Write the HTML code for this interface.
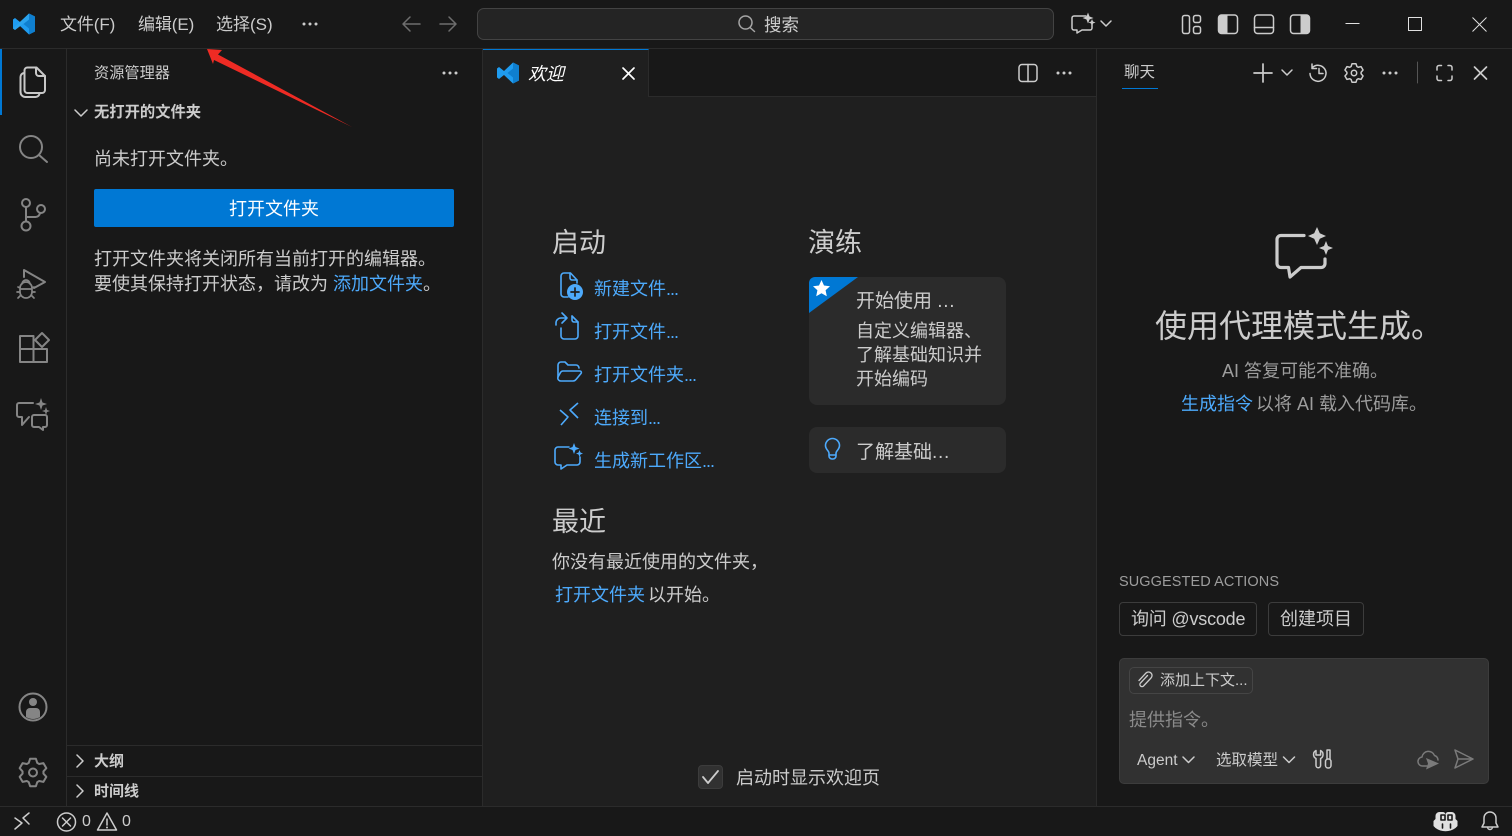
<!DOCTYPE html>
<html lang="zh"><head><meta charset="utf-8"><title>VS Code</title>
<style>
html,body{margin:0;padding:0;width:1512px;height:836px;overflow:hidden;background:#181818}
body{position:relative;font-family:"Liberation Sans","Noto Sans CJK SC",sans-serif;color:#ccc}
.t{position:absolute;white-space:nowrap;line-height:1;font-size:18px}
.b{position:absolute;box-sizing:border-box}
.l{color:#4daafc}
.d{letter-spacing:-1px}
.e{letter-spacing:.7px}
svg{position:absolute;left:0;top:0}
</style></head><body>
<!-- panels -->
<div class="b" style="left:0;top:48px;width:1512px;height:1px;background:#2b2b2b"></div>
<div class="b" style="left:66px;top:49px;width:1px;height:757px;background:#2b2b2b"></div>
<div class="b" style="left:482px;top:49px;width:1px;height:757px;background:#2b2b2b"></div>
<div class="b" style="left:483px;top:97px;width:613px;height:709px;background:#1f1f1f"></div>
<div class="b" style="left:483px;top:96px;width:613px;height:1px;background:#2b2b2b"></div>
<div class="b" style="left:483px;top:49px;width:166px;height:48px;background:#1f1f1f;border-top:1px solid #0078d4;border-right:1px solid #2b2b2b"></div>
<div class="b" style="left:1096px;top:49px;width:1px;height:757px;background:#2b2b2b"></div>
<div class="b" style="left:0;top:806px;width:1512px;height:1px;background:#2b2b2b"></div>
<div class="b" style="left:67px;top:745px;width:415px;height:1px;background:#2b2b2b"></div>
<div class="b" style="left:67px;top:776px;width:415px;height:1px;background:#2b2b2b"></div>
<div class="b" style="left:0;top:49px;width:2px;height:66px;background:#0078d4"></div>
<!-- title bar -->
<span class="t" style="left:60px;top:16px;font-size:17px;letter-spacing:-.1px">文件(F)</span>
<span class="t" style="left:138px;top:16px;font-size:17px;letter-spacing:-.1px">编辑(E)</span>
<span class="t" style="left:216px;top:16px;font-size:17px">选择(S)</span>
<div class="b" style="left:477px;top:8px;width:577px;height:32px;background:#242424;border:1px solid #434343;border-radius:7px"></div>
<span class="t" style="left:764px;top:17px;color:#ccc;font-size:17.500px">搜索</span>
<!-- sidebar -->
<span class="t" style="left:94px;top:66px;font-size:15.200px">资源管理器</span>
<span class="t" style="left:94px;top:105px;font-size:15.300px;font-weight:700">无打开的文件夹</span>
<span class="t" style="left:94px;top:150px">尚未打开文件夹。</span>
<div class="b" style="left:94px;top:189px;width:360px;height:38px;background:#0078d4;border-radius:2px"></div>
<span class="t" style="left:229px;top:200px;color:#fff">打开文件夹</span>
<span class="t" style="left:94px;top:250px">打开文件夹将关闭所有当前打开的编辑器。</span>
<span class="t" style="left:94px;top:275px">要使其保持打开状态，请改为 <span class="l">添加文件夹</span>。</span>
<span class="t" style="left:94px;top:754px;font-size:15px;font-weight:700">大纲</span>
<span class="t" style="left:94px;top:784px;font-size:15px;font-weight:700">时间线</span>
<!-- editor -->
<span class="t" style="left:528px;top:65px;color:#fff;font-style:italic">欢迎</span>
<span class="t" style="left:552px;top:230px;font-size:27px">启动</span>
<span class="t l" style="left:594px;top:280px">新建文件<span class="d">...</span></span>
<span class="t l" style="left:594px;top:323px">打开文件<span class="d">...</span></span>
<span class="t l" style="left:594px;top:366px">打开文件夹<span class="d">...</span></span>
<span class="t l" style="left:594px;top:409px">连接到<span class="d">...</span></span>
<span class="t l" style="left:594px;top:452px">生成新工作区<span class="d">...</span></span>
<span class="t" style="left:552px;top:509px;font-size:27px">最近</span>
<span class="t" style="left:552px;top:553px">你没有最近使用的文件夹，</span>
<span class="t" style="left:555px;top:586px"><span class="l">打开文件夹</span><span style="margin-left:3px">以开始。</span></span>
<span class="t" style="left:808px;top:230px;font-size:27px">演练</span>
<div class="b" style="left:809px;top:277px;width:197px;height:128px;background:#2b2b2b;border-radius:8px"></div>
<div class="b" style="left:809px;top:427px;width:197px;height:46px;background:#2b2b2b;border-radius:8px"></div>
<span class="t" style="left:856px;top:292px;font-size:19px">开始使用 <span class="e">...</span></span>
<span class="t" style="left:856px;top:322px">自定义编辑器、</span>
<span class="t" style="left:856px;top:346px">了解基础知识并</span>
<span class="t" style="left:856px;top:370px">开始编码</span>
<span class="t" style="left:856px;top:443px;font-size:19px">了解基础<span class="e">...</span></span>
<div class="b" style="left:698px;top:765px;width:25px;height:24px;background:#313131;border:1px solid #3c3c3c;border-radius:4px"></div>
<span class="t" style="left:736px;top:769px">启动时显示欢迎页</span>
<!-- chat -->
<span class="t" style="left:1124px;top:65px;font-size:15.500px">聊天</span>
<div class="b" style="left:1122px;top:88px;width:36px;height:1px;background:#0078d4"></div>
<span class="t" style="left:1155px;top:310px;font-size:32px">使用代理模式生成。</span>
<span class="t" style="left:1222px;top:362px;color:#9d9d9d">AI 答复可能不准确。</span>
<span class="t" style="left:1181px;top:395px;color:#9d9d9d"><span class="l">生成指令</span><span style="margin-left:3px">以将 AI 载入代码库。</span></span>
<span class="t" style="left:1119px;top:575px;font-size:14.500px;letter-spacing:.08px;color:#9d9d9d">SUGGESTED ACTIONS</span>
<div class="b" style="left:1119px;top:602px;width:138px;height:34px;border:1px solid #3c3c3c;border-radius:4px"></div>
<span class="t" style="left:1131px;top:610px;letter-spacing:-.2px">询问 @vscode</span>
<div class="b" style="left:1268px;top:602px;width:96px;height:34px;border:1px solid #3c3c3c;border-radius:4px"></div>
<span class="t" style="left:1280px;top:610px">创建项目</span>
<div class="b" style="left:1119px;top:658px;width:370px;height:126px;background:#313131;border:1px solid #3c3c3c;border-radius:5px"></div>
<div class="b" style="left:1129px;top:667px;width:124px;height:27px;border:1px solid #454545;border-radius:5px"></div>
<span class="t" style="left:1160px;top:673px;font-size:15px">添加上下文...</span>
<span class="t" style="left:1129px;top:711px;color:#8a8a8a">提供指令。</span>
<span class="t" style="left:1137px;top:753px;font-size:15.500px">Agent</span>
<span class="t" style="left:1216px;top:753px;font-size:15.500px">选取模型</span>
<!-- status -->
<span class="t" style="left:82px;top:814px;font-size:16px">0</span>
<span class="t" style="left:122px;top:814px;font-size:16px">0</span>

<svg width="1512" height="836" viewBox="0 0 1512 836" fill="none" stroke-linecap="round" stroke-linejoin="round">
<!-- logo -->
<path d="M29 13.500 35 16.500V31.500L29 34.500 20 26l-5 4-2-1.500V19.500L15 18l5 4z" fill="#1f9cf0"/>
<path d="M29 13.500 35 16.500V31.500L29 34.500zM29 19.500 23.500 24l5.500 4.500z" fill="#0f7fcf"/>
<path d="M13 28.500 29 13.500v6L15 30z" fill="#2aa3ee"/>
<g transform="translate(484,49)"><path d="M29 13.500 35 16.500V31.500L29 34.500 20 26l-5 4-2-1.500V19.500L15 18l5 4z" fill="#1f9cf0"/><path d="M29 13.500 35 16.500V31.500L29 34.500zM29 19.500 23.500 24l5.500 4.500z" fill="#0f7fcf"/></g>
<!-- dots -->
<g fill="#ccc"><circle cx="304" cy="24" r="1.500"/><circle cx="310" cy="24" r="1.500"/><circle cx="316" cy="24" r="1.500"/>
<circle cx="444" cy="73" r="1.500"/><circle cx="450" cy="73" r="1.500"/><circle cx="456" cy="73" r="1.500"/>
<circle cx="1058" cy="73" r="1.500"/><circle cx="1064" cy="73" r="1.500"/><circle cx="1070" cy="73" r="1.500"/>
<circle cx="1384" cy="73" r="1.500"/><circle cx="1390" cy="73" r="1.500"/><circle cx="1396" cy="73" r="1.500"/></g>
<!-- nav arrows -->
<path d="M403 24H420M410 17l-7 7 7 7M440 24H456M449 17l7 7-7 7" stroke="#6e6e6e" stroke-width="1.500"/>
<!-- search -->
<circle cx="745.500" cy="22.500" r="6.500" stroke="#a5a5a5" stroke-width="1.500"/><path d="M750 27.500l4.500 4" stroke="#a5a5a5" stroke-width="1.500"/>
<!-- copilot top -->
<g stroke="#ccc" stroke-width="1.500"><path d="M1086 16h-12a2 2 0 0 0-2 2v10a2 2 0 0 0 2 2h3v3l5-3h8a2 2 0 0 0 2-2v-4"/><path d="M1101 21l5 5 5-5"/></g>
<path d="M1088 12.500l1.500 4 4 1.500-4 1.500-1.500 4-1.500-4-4-1.500 4-1.500zM1092 19l1 2.500 2.500 1-2.500 1-1 2.500-1-2.500-2.500-1 2.500-1z" fill="#ccc"/>
<!-- layout icons -->
<g stroke="#ccc" stroke-width="1.500"><rect x="1182.500" y="15.500" width="7" height="18" rx="2"/><rect x="1193.500" y="15.500" width="7" height="7" rx="2"/><rect x="1193.500" y="26.500" width="7" height="7" rx="2"/>
<rect x="1218.500" y="15" width="19" height="18.500" rx="3"/><rect x="1254.500" y="15" width="19" height="18.500" rx="3"/><path d="M1254.500 27.500h19"/><rect x="1290.500" y="15" width="19" height="18.500" rx="3"/></g>
<path d="M1218.500 18a3 3 0 0 1 3-3h6v18.500h-6a3 3 0 0 1-3-3zM1309.500 18a3 3 0 0 0-3-3h-6v18.500h6a3 3 0 0 0 3-3z" fill="#ccc"/>
<!-- window -->
<g stroke="#e0e0e0" stroke-width="1" stroke-linecap="butt"><path d="M1345.500 23.500h14"/><rect x="1408.500" y="17.500" width="13" height="13"/><path d="M1472.500 17.500l14 14M1486.500 17.500l-14 14"/></g>
<!-- arrow -->
<path d="M207 49 222 50 218 54.500 352 127 214 60 213 64z" fill="#ee2b24"/>
<!-- activity -->
<g stroke="#c8c8c8" stroke-width="2"><path d="M27.500 67.500h9l8.500 8.500v14a3 3 0 0 1-3 3H27.500a3 3 0 0 1-3-3v-19.500a3 3 0 0 1 3-3z"/><path d="M36 67.500V73a3 3 0 0 0 3 3h6"/><path d="M24 73a4 4 0 0 0-3.500 4v15a5 5 0 0 0 5 5h10a4 4 0 0 0 4-3.500"/></g>
<g stroke="#858585" stroke-width="2">
<circle cx="31" cy="147" r="11"/><path d="M39 155l8 7"/>
<circle cx="26" cy="203" r="4"/><circle cx="26" cy="226" r="4.500"/><circle cx="41" cy="209" r="4"/><path d="M26 207v14.500M40 213a4.500 4.500 0 0 1-4.500 4H26"/>
<path d="M24 277v-7l21 12-11 6"/>
<path d="M20 288a6 6 0 0 1 12 0v4a6 6 0 0 1-12 0zM22 284a4 4 0 0 1 8 0M18 287l2 1M34 287l-2 1M17 292h3M35 292h-3M18 298l3-3M34 298l-3-3M20 289h12" stroke-width="1.700"/>
<path d="M33.500 336H20v26h27v-13H33.500V336M20 349h13.500v13"/><path d="M42 333l7 7-7 7-7-7z"/>
<path d="M33 403H19a2 2 0 0 0-2 2v10a2 2 0 0 0 2 2h3v8l7-8"/><path d="M34 415h11a2 2 0 0 1 2 2v8a2 2 0 0 1-2 2h-2v3l-4-3h-5a2 2 0 0 1-2-2v-8a2 2 0 0 1 2-2z"/>
<circle cx="33" cy="707" r="13.500"/>
<path transform="translate(33,772.500)" d="M-4.270-9.590L-2.910-13.690 2.910-13.690 4.270-9.590 6.170-8.490 10.400-9.370 13.310-4.330 10.440-1.100 10.440 1.100 13.310 4.330 10.400 9.370 6.170 8.490 4.270 9.590 2.910 13.690-2.910 13.690-4.270 9.590-6.170 8.490-10.400 9.370-13.310 4.330-10.440 1.100-10.440-1.100-13.310-4.330-10.400-9.370-6.170-8.490z"/>
<circle cx="33" cy="772.500" r="4"/>
</g>
<path d="M41 398l1.500 4.500 4.500 1.500-4.500 1.500-1.500 4.500-1.500-4.500-4.500-1.500 4.500-1.500zM46 407l1 3 3 1-3 1-1 3-1-3-3-1 3-1z" fill="#858585"/>
<circle cx="33" cy="702" r="4" fill="#858585"/><path d="M26 717v-5a4 4 0 0 1 4-4h6a4 4 0 0 1 4 4v5a13 13 0 0 1-14 0z" fill="#858585"/>
<!-- sidebar chevrons -->
<g stroke="#ccc" stroke-width="1.500"><path d="M75 110l6 6 6-6M77 755l6 6-6 6M77 785l6 6-6 6"/></g>
<!-- tab close -->
<path d="M623 68l11 11M634 68l-11 11" stroke="#fff" stroke-width="1.700"/>
<!-- split -->
<rect x="1019" y="64.500" width="18" height="17" rx="3" stroke="#ccc" stroke-width="1.500"/><path d="M1028 64.500v17" stroke="#ccc" stroke-width="1.500"/>
<!-- welcome icons -->
<g stroke="#4daafc" stroke-width="1.600">
<path d="M568 297h-4a3 3 0 0 1-3-3v-18a3 3 0 0 1 3-3h6.500l6.500 7v3"/><path d="M570 273v5a2 2 0 0 0 2 2h5"/>
<path d="M556 325v-2a5 5 0 0 1 5-5h6M562 313l5 5-5 5"/><path d="M561 328v8a3 3 0 0 0 3 3h11a3 3 0 0 0 3-3v-14l-6-6"/><path d="M572 316v4a2 2 0 0 0 2 2h4"/>
<path d="M558 377v-12a3 3 0 0 1 3-3h4l3 3h8a3 3 0 0 1 3 3"/><path d="M558 377a3 3 0 0 0 3 4h12a4 4 0 0 0 3-1.500l5-6a1.500 1.500 0 0 0-1-2.500h-17a3 3 0 0 0-2.500 1.500z"/>
<path d="M560 410l8 7-7 8M578 403l-8 7 8 8" stroke-linecap="butt"/>
<path d="M569 447h-11a3 3 0 0 0-3 3v12a3 3 0 0 0 3 3h3v4l6-4h10a3 3 0 0 0 3-3v-5"/>
<path d="M829 453c0-2-3.500-3.500-3.500-7.500a7 7 0 0 1 14 0c0 4-3.500 5.500-3.500 7.500v3a3 3 0 0 1-3 3h-1a3 3 0 0 1-3-3zM829 455h7"/>
</g>
<circle cx="575" cy="292" r="8" fill="#4daafc"/><path d="M575 288v8M571 292h8" stroke="#1f1f1f" stroke-width="1.700"/>
<path d="M574 443l1.500 4 4 1.500-4 1.500-1.500 4-1.500-4-4-1.500 4-1.500zM579.500 450l1 2.500 2.500 1-2.500 1-1 2.500-1-2.500-2.500-1 2.500-1z" fill="#4daafc"/>
<path d="M815 277h43l-49 36v-30a6 6 0 0 1 6-6z" fill="#0078d4"/>
<path d="M821.500 280l2.500 5.500 6 .7-4.400 4 1.200 6-5.300-3-5.300 3 1.200-6-4.400-4 6-.7z" fill="#fff"/>
<path d="M703 777l5 6 10-12" stroke="#ccc" stroke-width="1.800"/>
<!-- chat toolbar -->
<g stroke="#ccc" stroke-width="1.500">
<path d="M1263 64v18M1254 73h18" stroke-width="1.700"/><path d="M1282 70l5 5 5-5"/>
<path d="M1312 68a8 8 0 1 1-2 5.500M1312 64v4.500h4.500M1319 68.500v5h4"/>
<circle cx="1354" cy="73" r="2.700"/>
<path transform="translate(1354,73) scale(.68)" stroke-width="2.200" d="M-4.270-9.590L-2.910-13.690 2.910-13.690 4.270-9.590 6.170-8.490 10.400-9.370 13.310-4.330 10.440-1.100 10.440 1.100 13.310 4.330 10.400 9.370 6.170 8.490 4.270 9.590 2.910 13.690-2.910 13.690-4.270 9.590-6.170 8.490-10.400 9.370-13.310 4.330-10.440 1.100-10.440-1.100-13.310-4.330-10.400-9.370-6.170-8.490z"/>
<path d="M1417.500 62v21" stroke="#555" stroke-width="1"/>
<path d="M1437 70v-2.500a2 2 0 0 1 2-2h2.500M1448 65.500h2a2 2 0 0 1 2 2V70M1437 76v2.500a2 2 0 0 0 2 2h2.500M1452 76v2.500a2 2 0 0 1-2 2h-2"/>
<path d="M1474.500 67l12 12M1486.500 67l-12 12" stroke-width="1.700"/>
<path d="M1304 235.500h-23a4 4 0 0 0-4 4v24a4 4 0 0 0 4 4h7.500l1.500 9.500 11-9.500h20a4 4 0 0 0 4-4v-4.500" stroke="#ccc" stroke-width="3.200"/>
<path d="M1183 757l5.500 5.500 5.500-5.500M1283.500 757l5.500 5.500 5.500-5.500"/>
</g>
<path d="M1317 227l2.800 6.200 6.200 2.800-6.200 2.800-2.800 6.200-2.800-6.200-6.200-2.800 6.200-2.800zM1326 241l2 5 5 2-5 2-2 5-2-5-5-2 5-2z" fill="#ccc"/>
<!-- input icons -->
<path d="M1147.500 675.500l-7 7.500a2 2 0 0 0 3 3l7.500-8a3.500 3.500 0 0 0-5-5l-7 7.500" stroke="#ccc" stroke-width="1.300"/>
<g stroke="#ccc" stroke-width="1.500">
<path d="M1316 750.500a4.500 4.500 0 0 0 0 8v7a2.300 2.300 0 0 0 4.600 0v-7a4.500 4.500 0 0 0 0-8v4.500h-4.600z"/>
<rect x="1325.500" y="759" width="5.500" height="9" rx="2.500"/><path d="M1327 759v-9h3v9"/>
</g>
<g stroke="#7a7a7a" stroke-width="1.500">
<path d="M1427 766h-4a4.500 4.500 0 0 1-1-9 6.500 6.500 0 0 1 12.500-1.500 5 5 0 0 1 3.500 4.500"/>
<path d="M1455 750l18 9-18 9 3-9zM1458 759h15"/>
</g>
<path d="M1426 758l13 5.500-13 6 2-6z" fill="#7a7a7a"/>
<!-- status icons -->
<g stroke="#ccc" stroke-width="1.500">
<path d="M15 818l7 5-7 6M29 813l-6 5 6 6"/>
<circle cx="66.500" cy="822" r="9"/><path d="M62.500 818l8 8M70.500 818l-8 8"/>
<path d="M107 813l9.500 17h-19z"/><path d="M107 819v6"/>
<path d="M1490 812a6 6 0 0 1 6 6v5l2 4h-16l2-4v-5a6 6 0 0 1 6-6zM1487.500 827a2.500 2.500 0 0 0 5 0"/>
</g>
<circle cx="107" cy="827.500" r="1" fill="#ccc"/>
<path d="M1440 812h3a3 3 0 0 1 3 2.500 3 3 0 0 1 3-2.500h3a4 4 0 0 1 4 4v3l2 2v5l-2 2a17 17 0 0 1-20 0l-2-2v-5l2-2v-3a4 4 0 0 1 4-4z" fill="#e0e0e0" transform="translate(-.5,0)"/>
<path d="M1441 815h4v5h-4zM1448 815h4v5h-4zM1442.500 824v4M1450.500 824v4" stroke="#181818" stroke-width="1.600"/>
</svg>
</body></html>
